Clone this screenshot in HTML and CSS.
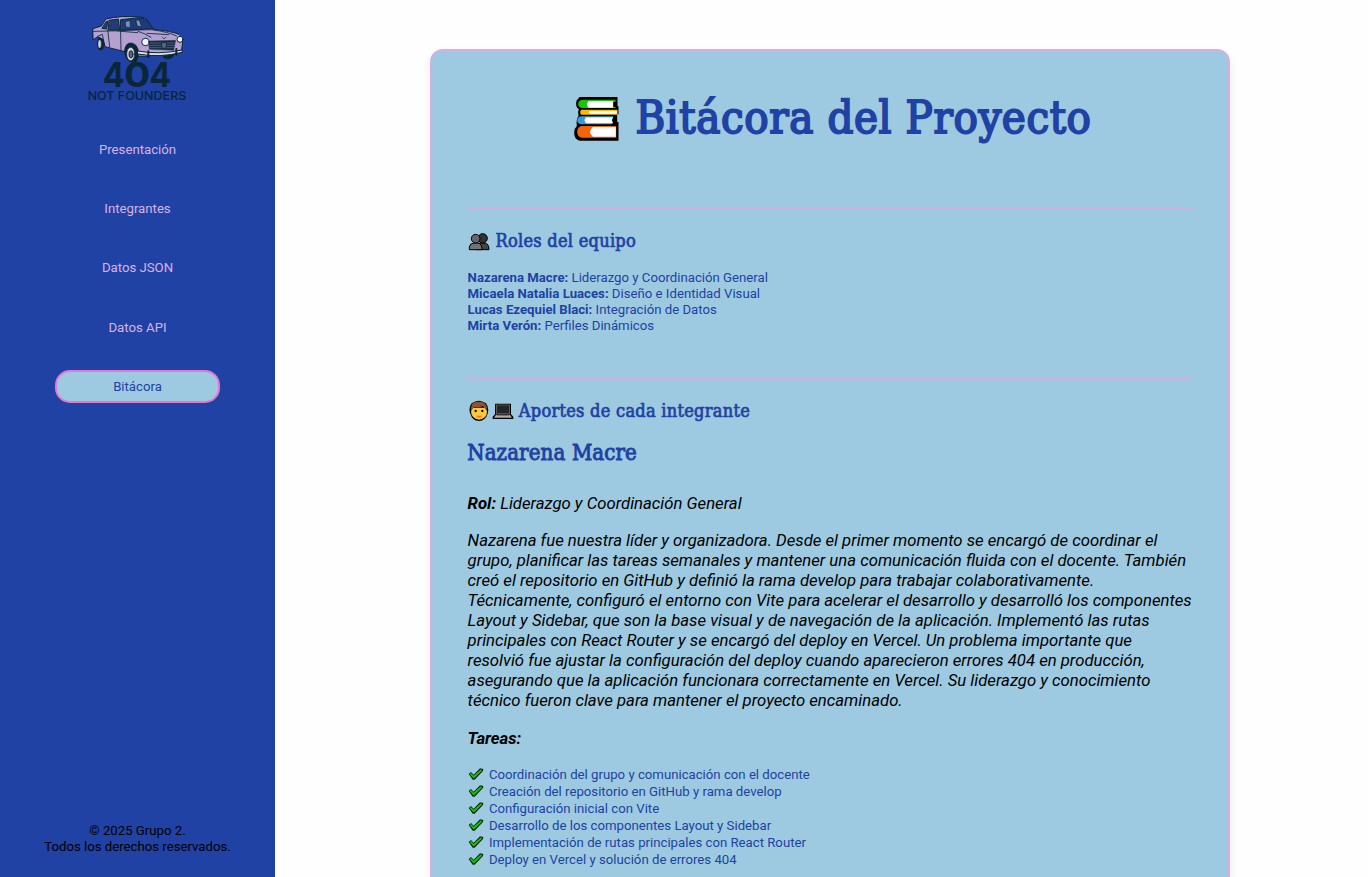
FILE: index.html
```html
<!DOCTYPE html>
<html lang="es">
<head>
<meta charset="utf-8">
<title>Bitácora del Proyecto</title>
<link rel="stylesheet" href="styles.css">
</head>
<body>
<svg width="0" height="0" class="defs">
  <symbol id="check" viewBox="0 0 48 36">
    <path d="M2 18 L9 12 L17 20 L36 1 L46 3 L45 9 L20 35 L14 35 Z" fill="#0b2a10"/>
    <path d="M7 18 L9 16.500 L17 25 L38 6 L41 7 L17 30 Z" fill="#16c60c" stroke="#16c60c" stroke-width="3"/>
  </symbol>
</svg>
<div class="layout">
  <aside class="sidebar">
    <svg class="logo" viewBox="0 0 420 345" role="img" aria-label="404 Not Founders">
      <g stroke="#0b2638" stroke-linejoin="round" stroke-linecap="round">
        <ellipse cx="92" cy="131" rx="10" ry="20" fill="#0b2638"/>
        <ellipse cx="89" cy="132" rx="5" ry="12" fill="#d8d0dc"/>
        <ellipse cx="294" cy="163" rx="18" ry="14" fill="#0b2638"/>
        <path d="M69 86 L94 78 L108 57 Q150 46 207 51 L226 53 L250 88 Q302 93 327 103 Q338 109 338 125 L335 150 L300 160 L225 169 L203 168 L184 132 L168 156 L105 140 L99 118 L83 110 L70 119 Z" fill="#b5a0d2" stroke-width="3"/>
        <path d="M153 59 L207 53 L229 58 L249 86 L154 91 Z" fill="#203a79" stroke-width="3"/>
        <path d="M118 61 L145 57 L149 91 L116 90 Z M108 66 L113 63 L110 87 L97 85 Z" fill="#263b76" stroke-width="3"/>
        <path d="M166 65 L180 61 L181 83 L168 81 Z M198 61 L208 60 L215 81 L202 78 Z" fill="#7d8eba" stroke-width="2"/>
        <path d="M151 61 L153 151 M113 89 L119 140 M70 94 Q135 89 203 98 M155 91 L250 89 M204 94 Q225 100 243 112 M250 90 Q292 95 320 108 M231 100 L296 104 M83 109 L97 103 L104 137" fill="none" stroke-width="2.500"/>
        <path d="M163 151 Q166 128 183 128 Q203 130 207 158 L201 183 Q192 191 180 185 Q165 180 163 151 Z" fill="#0b2638"/>
        <ellipse cx="182" cy="162" rx="12" ry="20" fill="#d9d8dd" stroke-width="2"/>
        <ellipse cx="183" cy="163" rx="6" ry="11" fill="#60647c" stroke-width="3"/>
        <path d="M236 123 L317 121 L311 151 L238 148 Z" fill="#162d46"/>
        <path d="M239 129 H313 M240 136 H312 M240 143 H312" stroke="#6b728c" stroke-width="2"/>
        <path d="M275 128 L291 128 L287 145 L277 145 Z" fill="#59647c" stroke-width="2"/>
        <circle cx="226" cy="126" r="11" fill="#f2f0f5" stroke-width="3"/>
        <circle cx="330" cy="118" r="9" fill="#f2f0f5" stroke-width="3"/>
        <path d="M203 153 Q265 165 336 150 L337 157 Q270 174 204 162 Z" fill="#e3e2e6" stroke-width="3"/>
        <path d="M235 154 V171 M319 147 V164" stroke-width="6"/>
        <path d="M277 111 L282 117 L288 111" fill="none" stroke-width="2"/>
      </g>
      <g fill="#0b2638">
        <text class="logo-number" y="260"><tspan x="98" textLength="66" lengthAdjust="spacingAndGlyphs">4</tspan><tspan x="162" textLength="79" lengthAdjust="spacingAndGlyphs">0</tspan><tspan x="238" textLength="66" lengthAdjust="spacingAndGlyphs">4</tspan></text>
        <text class="logo-name" x="53" y="301" textLength="296" lengthAdjust="spacingAndGlyphs">NOT FOUNDERS</text>
      </g>
    </svg>
    <nav class="menu">
      <a class="menu-item">Presentación</a>
      <a class="menu-item">Integrantes</a>
      <a class="menu-item">Datos JSON</a>
      <a class="menu-item">Datos API</a>
      <a class="menu-item active">Bitácora</a>
    </nav>
    <footer class="copyright">© 2025 Grupo 2.<br>Todos los derechos reservados.</footer>
  </aside>
  <main class="content">
    <article class="card">
      <h1 class="title">
        <svg class="books" viewBox="0 0 138 138">
          <path d="M18 3 H132 V31 H135 V55 H131 V78 H135 V134 H20 Q2 132 2 110 Q2 97 10 90 Q7 71 15 60 Q12 48 16 40 Q4 30 9 14 Z" fill="#000"/>
          <path d="M28 11 H126 V17 H49 Q39 24 49 33 H126 V36 H26 Q14 34 14 24 Q15 12 28 11 Z" fill="#16c60c"/>
          <path d="M45 15 H119 V35 H45 Q36 25 45 15 Z" fill="#fff"/>
          <path d="M23 41 H132 V56 H23 Q17 49 23 41 Z" fill="#ffb900"/><path d="M49 45 H130 V53 H49 Q43 49 49 45 Z" fill="#fff"/>
          <path d="M25 61 H119 V65 H43 V81 H115 V85 H25 Q11 84 11 73 Q12 62 25 61 Z" fill="#3a96dd"/><path d="M38 64 H119 L115 73 L119 82 H38 Q28 73 38 64 Z" fill="#fff"/>
          <path d="M25 90 H128 V125 H25 Q11 122 11 107 Q12 92 25 90 Z" fill="#f7630c"/><path d="M58 93 H127 V122 H58 Q41 108 58 93 Z" fill="#fff"/>
        </svg><span class="title-text">Bitácora del Proyecto</span>
      </h1>
      <section class="block roles">
        <h2 class="heading">
          <svg class="emoji" viewBox="0 0 66 60">
            <g stroke="#000" stroke-width="3"><path d="M24 56 V45 Q28 36 38 36 H50 Q63 37 63 56 Z" fill="#444"/><circle cx="44" cy="22" r="14" fill="#333"/><path d="M4 56 V48 Q5 37 18 36 H30 Q42 38 42 56 Z" fill="#737373"/><circle cx="23" cy="23" r="13" fill="#666"/></g>
          </svg><span>Roles del equipo</span>
        </h2>
        <p class="role-list"><b>Nazarena Macre:</b> Liderazgo y Coordinación General<br><b>Micaela Natalia Luaces:</b> Diseño e Identidad Visual<br><b>Lucas Ezequiel Blaci:</b> Integración de Datos<br><b>Mirta Verón:</b> Perfiles Dinámicos</p>
      </section>
      <section class="block">
        <h2 class="heading">
          <svg class="emoji" viewBox="0 0 66 66">
            <path d="M11 10 Q32 -6 54 10 Q64 23 59 41 Q53 61 33 63 Q12 61 7 41 Q0 24 11 10 Z" fill="#000"/><path d="M14 23 H51 L57 34 Q57 57 33 59 Q10 56 9 34 Z" fill="#ffc83d"/><path d="M9 30 Q6 4 33 5 Q60 5 56 31 L49 24 L45 17 Q35 24 18 21 L15 26 Z" fill="#8e562e"/><circle cx="23" cy="33" r="3.500"/><circle cx="43" cy="33" r="3.500"/><path d="M26 49 Q33 51 40 49" fill="none" stroke="#e8783a" stroke-width="5"/>
          </svg><svg class="emoji" viewBox="0 0 66 66">
            <path d="M9 11 H57 V43 L64 50 V57 H2 V50 L9 43 Z" fill="#000"/><path d="M12 14 H54 V41 H12 Z" fill="#777"/><path d="M14 16 H52 V39 H14 Z" fill="#252525"/><path d="M12 44 H54 L60 53 H6 Z" fill="#aaa"/><path d="M15 46 H51" stroke="#666" stroke-width="3"/>
          </svg><span class="aportes">Aportes de cada integrante</span>
        </h2>
        <h3 class="member">Nazarena Macre</h3>
        <p class="role"><b>Rol:</b> Liderazgo y Coordinación General</p>
        <p class="bio">Nazarena fue nuestra líder y organizadora. Desde el primer momento se encargó de coordinar el<br>grupo, planificar las tareas semanales y mantener una comunicación fluida con el docente. También<br>creó el repositorio en GitHub y definió la rama develop para trabajar colaborativamente.<br>Técnicamente, configuró el entorno con Vite para acelerar el desarrollo y desarrolló los componentes<br>Layout y Sidebar, que son la base visual y de navegación de la aplicación. Implementó las rutas<br>principales con React Router y se encargó del deploy en Vercel. Un problema importante que<br>resolvió fue ajustar la configuración del deploy cuando aparecieron errores 404 en producción,<br>asegurando que la aplicación funcionara correctamente en Vercel. Su liderazgo y conocimiento<br>técnico fueron clave para mantener el proyecto encaminado.</p>
        <p class="tasks-title"><b>Tareas:</b></p>
        <ul class="tasks">
          <li><svg class="check"><use href="#check"/></svg>Coordinación del grupo y comunicación con el docente</li>
          <li><svg class="check"><use href="#check"/></svg>Creación del repositorio en GitHub y rama develop</li>
          <li><svg class="check"><use href="#check"/></svg>Configuración inicial con Vite</li>
          <li><svg class="check"><use href="#check"/></svg>Desarrollo de los componentes Layout y Sidebar</li>
          <li><svg class="check"><use href="#check"/></svg>Implementación de rutas principales con React Router</li>
          <li><svg class="check"><use href="#check"/></svg>Deploy en Vercel y solución de errores 404</li>
        </ul>
      </section>
    </article>
  </main>
</div>
</body>
</html>
```
FILE: styles.css
```css
* { box-sizing: border-box; }
body { margin: 0; height: 877px; overflow: hidden; background: #fefefe; font-family: Roboto, sans-serif; font-size: 13.2px; }
h1, h2, h3, p, ul { margin: 0; padding: 0; }
b { font-weight: 700; }
.defs { position: absolute; }
.layout { display: flex; height: 877px; overflow: hidden; }
.sidebar { width: 275px; background: #2042a4; display: flex; flex-direction: column; align-items: center; }
.logo { width: 140px; height: 115px; margin-left: 5px; flex: none; }
.logo-number { font: 700 104px Inter, sans-serif; }
.logo-name { font: 500 37px Inter, sans-serif; stroke: #0b2638; stroke-width: .3px; }
.menu { width: 165px; margin-top: 18px; display: flex; flex-direction: column; gap: 26.2px; }
.menu-item { height: 33px; line-height: 29px; border: 2px solid transparent; border-radius: 15px; text-align: center; color: #d8b2e4; font-size: 13.2px; }
.active { background: #9ecae1; border-color: #e078d4; color: #2042a4; }
.copyright { margin-top: auto; padding-bottom: 22px; text-align: center; line-height: 16px; color: #000; }
.content { flex: 1; display: flex; justify-content: center; padding: 49px 0 0 17px; }
.card { width: 800px; height: 828px; flex: none; padding: 30px 35.2px 0; border: 2px solid #d3afe1; border-bottom: 0; border-radius: 13px 13px 0 0; background: #9ecae1; box-shadow: 0 4px 10px rgba(0,0,0,.08); color: #2042a4; }
.title { height: 127px; padding: 15px 0 0 5px; display: flex; justify-content: center; font: 400 45px/44px "DejaVu Serif Condensed", "DejaVu Serif", serif; -webkit-text-stroke: 1.9px #2042a4; }
.books { width: 47px; height: 46px; margin-right: 15px; -webkit-text-stroke: 0; }
.title-text { letter-spacing: .62px; white-space: nowrap; }
.block { border-top: 2px solid #d3afe1; padding-top: 20px; }
.roles { height: 170px; }
.heading { display: flex; align-items: center; height: 22px; font: 400 18px/22px "DejaVu Serif Condensed", "DejaVu Serif", serif; -webkit-text-stroke: .7px #2042a4; letter-spacing: .28px; white-space: nowrap; }
.emoji { width: 22px; height: 22px; margin: 0 0 0 1.3px; -webkit-text-stroke: 0; }
.heading span { margin-left: 5px; }
.role-list, .role, .bio, .tasks-title { padding-left: .4px; }
.role-list { margin-top: 18px; line-height: 16px; }
.member { margin-top: 17px; height: 28px; font: 400 22px/28px "DejaVu Serif Condensed", "DejaVu Serif", serif; -webkit-text-stroke: .9px #2042a4; letter-spacing: .15px; }
.role, .bio, .tasks-title { color: #000; font-size: 16.72px; line-height: 20px; font-style: italic; white-space: nowrap; }
.role { margin-top: 26px; }
.bio { margin-top: 17px; }
.tasks-title { margin-top: 18px; }
.tasks { margin-top: 18px; list-style: none; }
.tasks li { display: flex; align-items: center; height: 17px; }
.check { width: 16px; height: 12px; margin: 0 4.7px 1px 1px; }
```
